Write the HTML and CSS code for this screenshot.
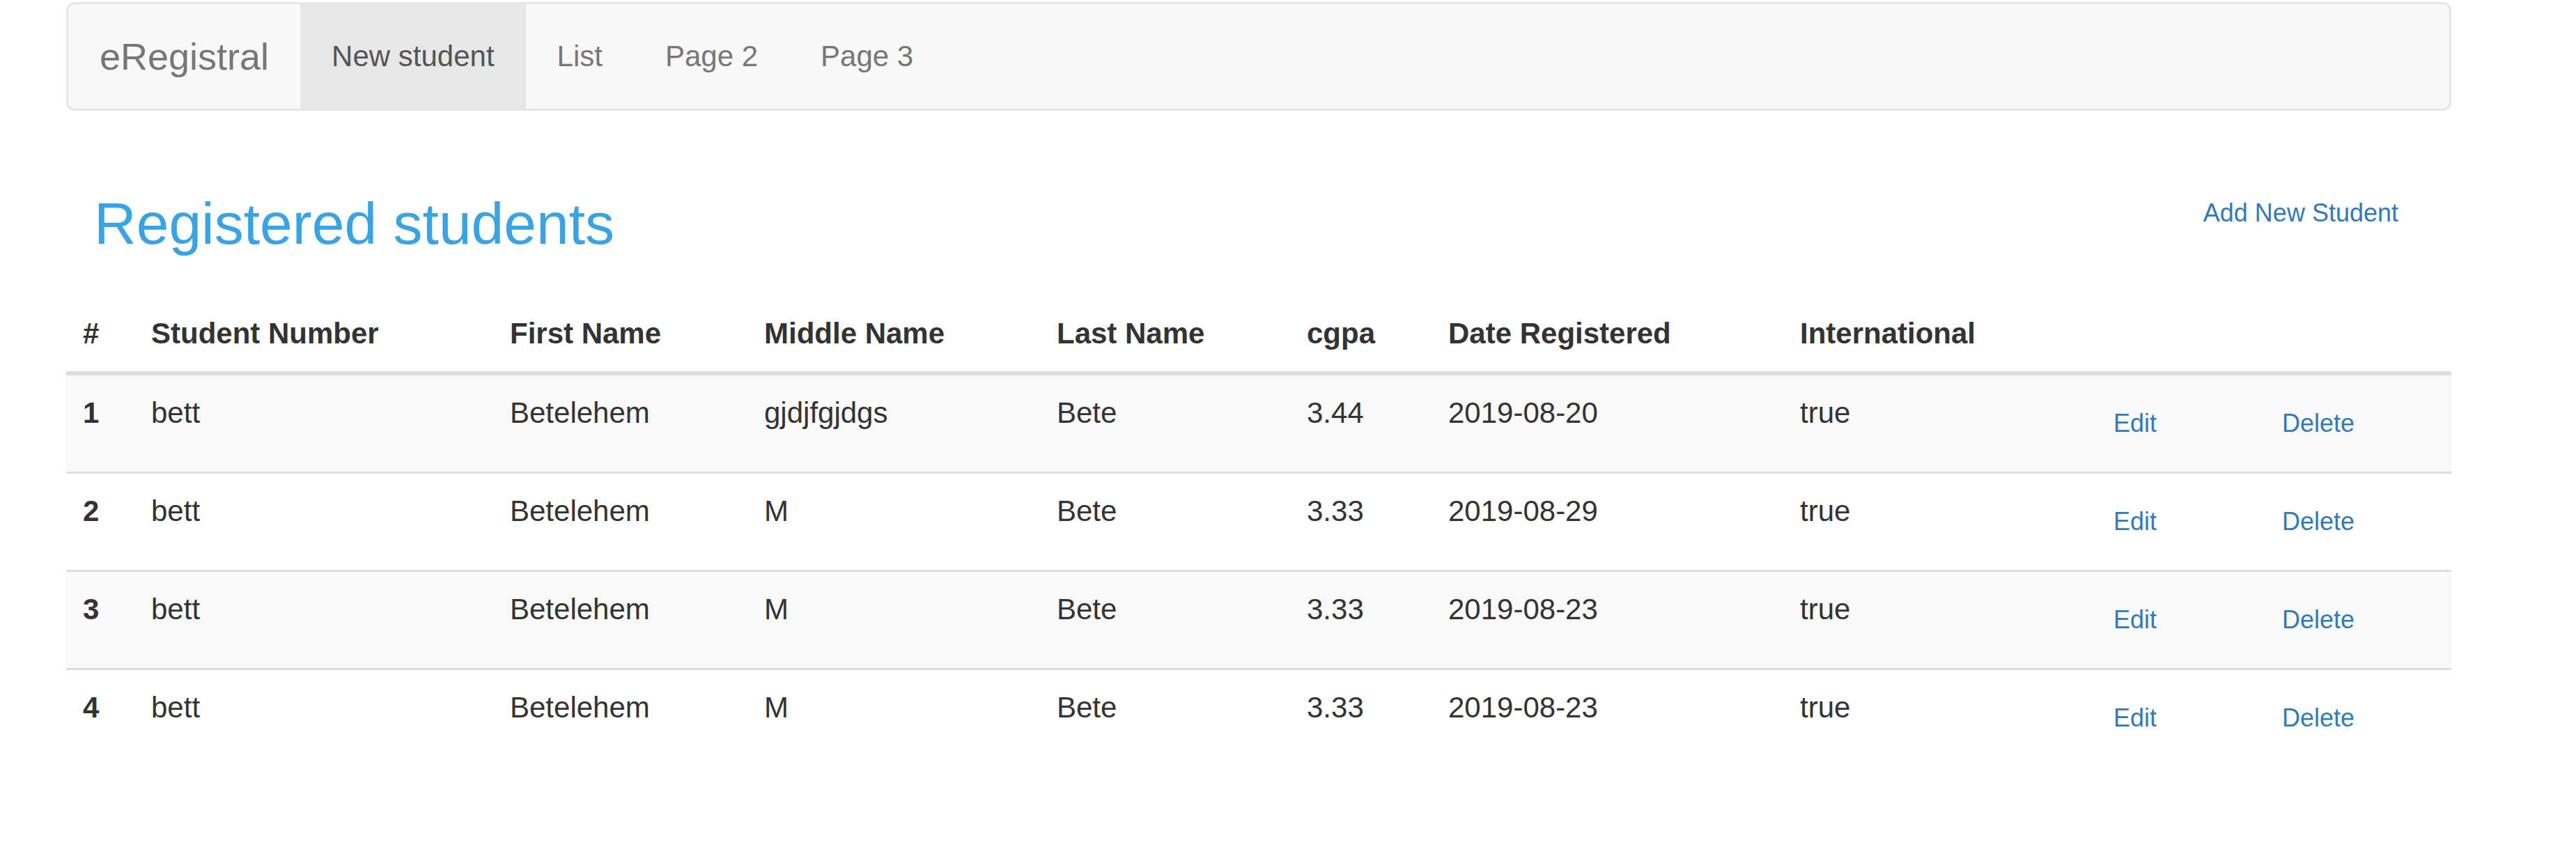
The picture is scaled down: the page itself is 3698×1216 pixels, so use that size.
FILE: index.html
```html
<!DOCTYPE html>
<html lang="en">
<head>
<meta charset="utf-8">
<title>eRegistral</title>
<link rel="stylesheet" href="styles.css">
</head>
<body>
<div class="page">
  <nav class="navbar">
    <a class="brand" href="#">eRegistral</a>
    <ul class="nav">
      <li class="active"><a href="#">New student</a></li>
      <li><a href="#">List</a></li>
      <li><a href="#">Page 2</a></li>
      <li><a href="#">Page 3</a></li>
    </ul>
  </nav>

  <div class="header">
    <h1 class="title">Registered students</h1>
    <a class="btn btn-add" href="#">Add New Student</a>
  </div>

  <table class="table">
    <colgroup>
      <col class="c1"><col class="c2"><col class="c3"><col class="c4"><col class="c5">
      <col class="c6"><col class="c7"><col class="c8"><col class="c9"><col class="c10">
    </colgroup>
    <thead>
      <tr>
        <th>#</th><th>Student Number</th><th>First Name</th><th>Middle Name</th><th>Last Name</th>
        <th>cgpa</th><th>Date Registered</th><th>International</th><th></th><th></th>
      </tr>
    </thead>
    <tbody>
      <tr class="odd">
        <th>1</th><td>bett</td><td>Betelehem</td><td>gjdjfgjdgs</td><td>Bete</td><td>3.44</td><td>2019-08-20</td><td>true</td>
        <td><a class="btn" href="#">Edit</a></td><td><a class="btn" href="#">Delete</a></td>
      </tr>
      <tr>
        <th>2</th><td>bett</td><td>Betelehem</td><td>M</td><td>Bete</td><td>3.33</td><td>2019-08-29</td><td>true</td>
        <td><a class="btn" href="#">Edit</a></td><td><a class="btn" href="#">Delete</a></td>
      </tr>
      <tr class="odd">
        <th>3</th><td>bett</td><td>Betelehem</td><td>M</td><td>Bete</td><td>3.33</td><td>2019-08-23</td><td>true</td>
        <td><a class="btn" href="#">Edit</a></td><td><a class="btn" href="#">Delete</a></td>
      </tr>
      <tr>
        <th>4</th><td>bett</td><td>Betelehem</td><td>M</td><td>Bete</td><td>3.33</td><td>2019-08-23</td><td>true</td>
        <td><a class="btn" href="#">Edit</a></td><td><a class="btn" href="#">Delete</a></td>
      </tr>
    </tbody>
  </table>
</div>
</body>
</html>
```
FILE: styles.css
```css
* { box-sizing: border-box; }

html, body {
  margin: 0;
  padding: 0;
  background: #fff;
}

body {
  font-family: "Liberation Sans", Arial, Helvetica, sans-serif;
  font-size: 42px;
  line-height: 60px;
  color: #333;
}

a { text-decoration: none; }

.page {
  width: 3424px;
  margin-left: 95px;
  padding-top: 3px;
}

/* navbar */
.navbar {
  display: flex;
  height: 156px;
  background: #f8f8f8;
  border: 3px solid #e7e7e7;
  border-radius: 12px;
}

.brand {
  display: block;
  padding: 45px;
  height: 150px;
  font-size: 54px;
  line-height: 60px;
  color: #777;
}

.nav {
  display: flex;
  list-style: none;
  margin: 0;
  padding: 0;
}

.nav li a {
  display: block;
  padding: 45px;
  height: 150px;
  font-size: 42px;
  line-height: 60px;
  color: #777;
}

.nav li.active a {
  background: #e7e7e7;
  color: #555;
}

/* header */
.header {
  display: flex;
  justify-content: space-between;
  align-items: flex-start;
}

.title {
  margin: 116px 0 0 40px;
  font-size: 84px;
  line-height: 92px;
  font-weight: normal;
  color: #39a3e3;
}

.btn {
  display: inline-block;
  padding: 15px 30px;
  border: 3px solid transparent;
  font-size: 36px;
  line-height: 54px;
  color: #337ab7;
  background: none;
  white-space: nowrap;
}

.btn-add {
  margin: 102px 43px 0 0;
}

/* table */
.table {
  width: 3424px;
  margin-top: 58px;
  border-collapse: separate;
  border-spacing: 0;
  table-layout: fixed;
}

.c1 { width: 98px; }
.c2 { width: 515px; }
.c3 { width: 365px; }
.c4 { width: 420px; }
.c5 { width: 359px; }
.c6 { width: 203px; }
.c7 { width: 505px; }
.c8 { width: 417px; }
.c9 { width: 242px; }
.c10 { width: 300px; }

.table th,
.table td {
  padding: 24px;
  text-align: left;
  vertical-align: top;
  line-height: 60px;
  white-space: nowrap;
}

.table thead th {
  font-weight: bold;
  border-bottom: 6px solid #ddd;
}

.table tbody th,
.table tbody td {
  border-top: 3px solid #ddd;
}

.table tbody tr:first-child th,
.table tbody tr:first-child td {
  border-top: 0;
}

.table tbody th { font-weight: bold; }

.table tr.odd th,
.table tr.odd td {
  background: #f9f9f9;
}
```
